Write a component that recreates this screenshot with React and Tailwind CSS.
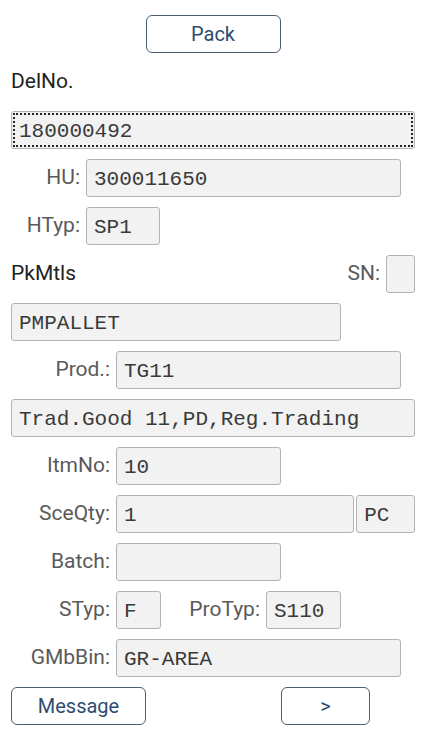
import React from "react";

const sans = "font-['Roboto','Liberation_Sans',sans-serif]";
const mono = "font-['Liberation_Mono',monospace]";

function Field({ value = "", className = "", focused = false }) {
  return (
    <div
      className={`h-[38px] flex items-center px-[7px] pt-[3px] bg-[#f2f2f2] border border-[#b3b3b3] rounded-[3px] text-[21px] text-[#3a3a3a] ${mono} whitespace-pre ${
        focused ? "outline-2 outline-dotted outline-[#222] outline-offset-[-4px]" : ""
      } ${className}`}
    >
      {value}
    </div>
  );
}

function Label({ text, className = "" }) {
  return (
    <span className={`text-[21px] text-[#5a5a5a] text-right shrink-0 ${className}`}>
      {text}
    </span>
  );
}

function Button({ children, className = "" }) {
  return (
    <button
      className={`h-[38px] border border-[#4a5d72] rounded-[6px] bg-white text-[20px] text-[#2f4d70] ${className}`}
    >
      {children}
    </button>
  );
}

function Row({ children, className = "" }) {
  return <div className={`h-[38px] flex items-center ${className}`}>{children}</div>;
}

export default function App() {
  return (
    <div className={`min-h-screen bg-white pt-[15px] pl-[11px] pr-[10px] flex flex-col gap-[10px] ${sans}`}>
      <Row className="justify-center">
        <Button className="w-[135px]">Pack</Button>
      </Row>

      <Row>
        <span className="text-[21px] text-[#222]">DelNo.</span>
      </Row>

      <Field value="180000492" focused className="w-full" />

      <Row className="gap-[6px]">
        <Label text="HU:" className="w-[69px]" />
        <Field value="300011650" className="w-[315px]" />
      </Row>

      <Row className="gap-[6px]">
        <Label text="HTyp:" className="w-[69px]" />
        <Field value="SP1" className="w-[74px]" />
      </Row>

      <Row className="justify-between">
        <span className="text-[21px] text-[#222]">PkMtls</span>
        <div className="flex items-center gap-[6px]">
          <Label text="SN:" />
          <Field className="w-[29px] !px-0" />
        </div>
      </Row>

      <Field value="PMPALLET" className="w-[330px]" />

      <Row className="gap-[6px]">
        <Label text="Prod.:" className="w-[99px]" />
        <Field value="TG11" className="w-[285px]" />
      </Row>

      <Field value="Trad.Good 11,PD,Reg.Trading" className="w-full" />

      <Row className="gap-[6px]">
        <Label text="ItmNo:" className="w-[99px]" />
        <Field value="10" className="w-[165px]" />
      </Row>

      <Row>
        <Label text="SceQty:" className="w-[99px] mr-[6px]" />
        <Field value="1" className="w-[239px]" />
        <Field value="PC" className="w-[59px] ml-[2px]" />
      </Row>

      <Row className="gap-[6px]">
        <Label text="Batch:" className="w-[99px]" />
        <Field className="w-[165px]" />
      </Row>

      <Row className="gap-[6px]">
        <Label text="STyp:" className="w-[99px]" />
        <Field value="F" className="w-[45px]" />
        <Label text="ProTyp:" className="w-[93px]" />
        <Field value="S110" className="w-[75px]" />
      </Row>

      <Row className="gap-[6px]">
        <Label text="GMbBin:" className="w-[99px]" />
        <Field value="GR-AREA" className="w-[285px]" />
      </Row>

      <Row>
        <Button className="w-[135px]">Message</Button>
        <Button className="w-[89px] ml-[135px]">&gt;</Button>
      </Row>
    </div>
  );
}
